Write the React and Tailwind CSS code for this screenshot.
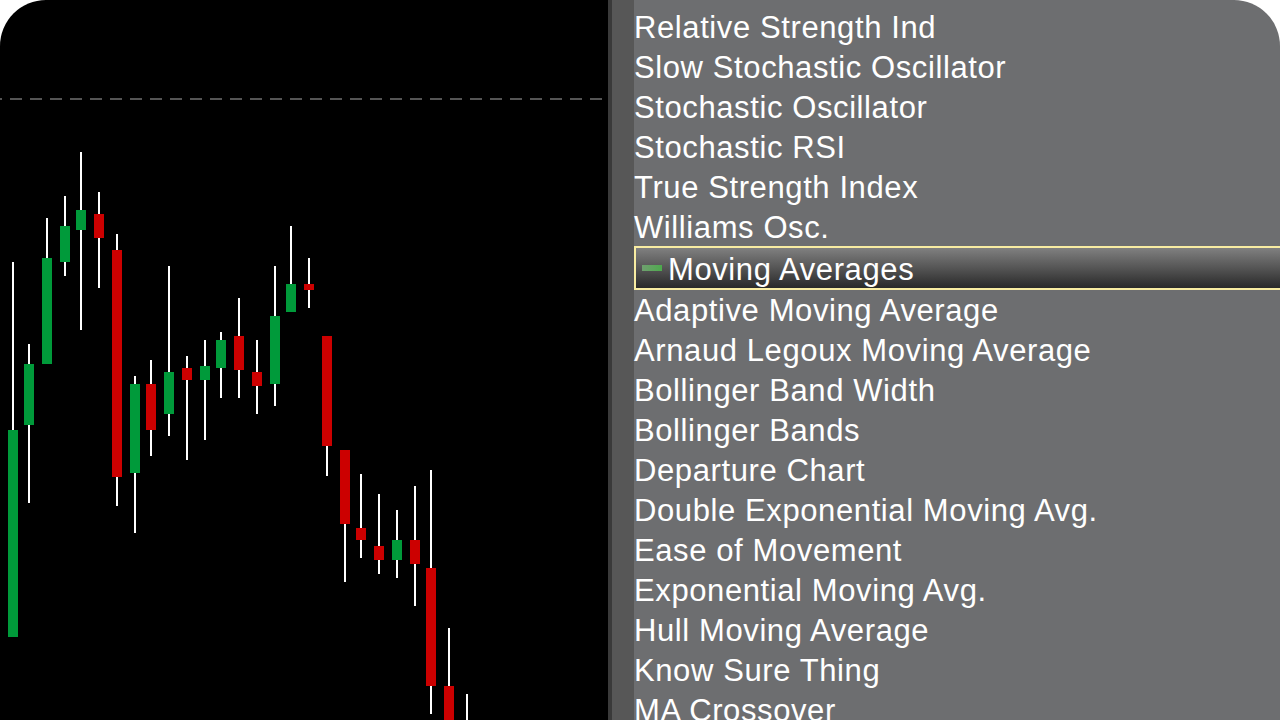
import React from 'react';

const GREEN = '#009a3a';
const RED = '#cc0000';

// x = centre, wt/wb = wick top/bottom, bt/bb = body top/bottom
const candles = [
  { x: 13, wt: 262, wb: 637, bt: 430, bb: 637, up: true },
  { x: 29, wt: 344, wb: 503, bt: 364, bb: 425, up: true },
  { x: 47, wt: 218, wb: 364, bt: 258, bb: 364, up: true },
  { x: 65, wt: 196, wb: 276, bt: 226, bb: 262, up: true },
  { x: 81, wt: 152, wb: 330, bt: 210, bb: 230, up: true },
  { x: 99, wt: 192, wb: 288, bt: 214, bb: 238, up: false },
  { x: 117, wt: 234, wb: 506, bt: 250, bb: 477, up: false },
  { x: 135, wt: 376, wb: 533, bt: 384, bb: 473, up: true },
  { x: 151, wt: 360, wb: 456, bt: 384, bb: 430, up: false },
  { x: 169, wt: 266, wb: 436, bt: 372, bb: 414, up: true },
  { x: 187, wt: 356, wb: 460, bt: 368, bb: 380, up: false },
  { x: 205, wt: 340, wb: 440, bt: 366, bb: 380, up: true },
  { x: 221, wt: 332, wb: 398, bt: 340, bb: 368, up: true },
  { x: 239, wt: 298, wb: 398, bt: 336, bb: 370, up: false },
  { x: 257, wt: 340, wb: 414, bt: 372, bb: 386, up: false },
  { x: 275, wt: 266, wb: 406, bt: 316, bb: 384, up: true },
  { x: 291, wt: 226, wb: 312, bt: 284, bb: 312, up: true },
  { x: 309, wt: 258, wb: 308, bt: 284, bb: 290, up: false },
  { x: 327, wt: 336, wb: 476, bt: 336, bb: 446, up: false },
  { x: 345, wt: 450, wb: 582, bt: 450, bb: 524, up: false },
  { x: 361, wt: 474, wb: 558, bt: 528, bb: 540, up: false },
  { x: 379, wt: 494, wb: 574, bt: 546, bb: 560, up: false },
  { x: 397, wt: 510, wb: 578, bt: 540, bb: 560, up: true },
  { x: 415, wt: 486, wb: 606, bt: 540, bb: 564, up: false },
  { x: 431, wt: 470, wb: 714, bt: 568, bb: 686, up: false },
  { x: 449, wt: 628, wb: 740, bt: 686, bb: 740, up: false },
  { x: 467, wt: 694, wb: 740, bt: 730, bb: 740, up: false },
];

const oscillators = [
  'Relative Strength Ind',
  'Slow Stochastic Oscillator',
  'Stochastic Oscillator',
  'Stochastic RSI',
  'True Strength Index',
  'Williams Osc.',
];

const movingAverages = [
  'Adaptive Moving Average',
  'Arnaud Legoux Moving Average',
  'Bollinger Band Width',
  'Bollinger Bands',
  'Departure Chart',
  'Double Exponential Moving Avg.',
  'Ease of Movement',
  'Exponential Moving Avg.',
  'Hull Moving Average',
  'Know Sure Thing',
  'MA Crossover',
];

const CandleChart = () => (
  <svg width="608" height="720" className="block">
    <line x1="0" y1="99" x2="604" y2="99" stroke="#555555" strokeWidth="2" strokeDasharray="12 8" strokeDashoffset="10" />
    {candles.map((c, i) => (
      <g key={i}>
        <rect x={c.x - 1} y={c.wt} width="2" height={c.wb - c.wt} fill="#ffffff" />
        <rect x={c.x - 5} y={c.bt} width="10" height={c.bb - c.bt} fill={c.up ? GREEN : RED} />
      </g>
    ))}
  </svg>
);

const Row = ({ label }) => (
  <div className="h-[40px] pt-[1px] leading-[40px] whitespace-nowrap">{label}</div>
);

const App = () => {
  return (
    <div className="w-[1280px] h-[720px] bg-white overflow-hidden">
      <div
        className="flex h-full rounded-t-[46px] overflow-hidden"
        style={{ fontFamily: '"Liberation Sans", Arial, sans-serif' }}
      >
        {/* chart */}
        <div className="w-[608px] h-full bg-black shrink-0">
          <CandleChart />
        </div>
        <div className="w-[4px] h-full bg-[#3a3a3a] shrink-0" />
        <div className="w-[22px] h-full bg-[#575757] shrink-0" />

        {/* indicator list */}
        <div className="flex-1 h-full bg-[#6d6e70] text-white text-[31px] tracking-[0.6px] pt-[7px]">
          {oscillators.map(label => (
            <Row key={label} label={label} />
          ))}

          {/* section header */}
          <div className="h-[44px] -mt-[1px] flex items-center border-y-2 border-l-2 border-[#f8eca2] bg-gradient-to-b from-[#808080] via-[#555555] to-[#2a2a2a] whitespace-nowrap">
            <span className="ml-[6px] w-[20px] h-[6px] bg-gradient-to-r from-[#6f9f6f] to-[#4caa4c]" />
            <span className="ml-[6px] pt-[4px] leading-[36px]">Moving Averages</span>
          </div>

          {movingAverages.map(label => (
            <Row key={label} label={label} />
          ))}
        </div>
      </div>
    </div>
  );
};

export default App;
